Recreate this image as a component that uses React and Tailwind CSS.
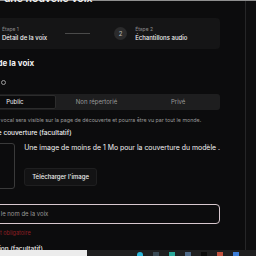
export default function App() {
  return (
    <div className="w-[256px] h-[256px] overflow-hidden bg-[#0c0c0d] flex flex-col font-['Inter',sans-serif] text-[#f1f1f1]">
      <div className="flex flex-1 min-h-0 border-t border-[#8f8f8f]">
        <div className="w-[272px] ml-[-27px] shrink-0 flex flex-col">
          <div className="w-[247px] flex flex-col">
            <h1 className="text-[10.5px] font-semibold leading-[12px] mt-[-8px] whitespace-nowrap">Créer une nouvelle voix</h1>
            <div className="mt-[13px] h-[31px] rounded-[4px] bg-[#151516] flex items-center px-[8px]">
              <div className="w-[13px] h-[13px] rounded-full bg-[#e8e8e8] text-[#111] text-[6px] flex items-center justify-center shrink-0">1</div>
              <div className="ml-[8px] flex flex-col leading-none">
                <span className="text-[5px] text-[#8b8b8b]">Étape 1</span>
                <span className="text-[6px] mt-[3px] font-medium">Détail de la voix</span>
              </div>
              <div className="ml-[18px] w-[25px] h-[1.5px] bg-[#4a4a4a]" />
              <div className="ml-[24px] w-[13px] h-[13px] rounded-full bg-[#2b2b2c] text-[#bdbdbd] text-[6px] flex items-center justify-center shrink-0">2</div>
              <div className="ml-[8px] flex flex-col leading-none">
                <span className="text-[5px] text-[#8b8b8b]">Étape 2</span>
                <span className="text-[6px] mt-[3px] font-medium">Échantillons audio</span>
              </div>
            </div>
            <h2 className="mt-[9px] text-[8px] font-bold leading-[10px]">Détail de la voix</h2>
            <div className="mt-[11px] flex items-center gap-[2px] text-[6.5px] font-medium leading-none">
              <span>Visibilité</span>
              <span className="w-[5px] h-[5px] rounded-full border border-[#9a9a9a]" />
            </div>
            <div className="mt-[8px] h-[16px] rounded-[3px] bg-[#1e1e1f] p-[1px] grid grid-cols-3 text-[6px] leading-none">
              <div className="rounded-[2px] bg-[#0c0c0d] border border-[#2c2c2c] flex items-center justify-center">Public</div>
              <div className="flex items-center justify-center text-[#9a9a9a]">Non répertorié</div>
              <div className="flex items-center justify-center text-[#9a9a9a]">Privé</div>
            </div>
            <p className="mt-[7px] text-[5.3px] text-[#9a9a9a] leading-[6px] whitespace-nowrap">Le modèle vocal sera visible sur la page de découverte et pourra être vu par tout le monde.</p>
            <div className="mt-[6px] text-[6.5px] font-medium leading-[8px]">Image de couverture (facultatif)</div>
            <div className="mt-[6px] flex">
              <div className="w-[43px] h-[46px] rounded-[3px] border border-[#3a3a3a] flex items-center justify-center">
                <svg width="12" height="12" viewBox="0 0 24 24" fill="none" stroke="#cfcfcf" strokeWidth="2">
                  <rect x="3" y="3" width="18" height="18" rx="2" />
                  <circle cx="9" cy="9" r="2" />
                  <path d="M21 15l-5-5L5 21" />
                </svg>
              </div>
              <div className="ml-[9px] flex flex-col items-start">
                <span className="mt-[1px] text-[6.9px] leading-[8px] whitespace-nowrap">Une image de moins de 1 Mo pour la couverture du modèle .</span>
                <button className="mt-[16px] h-[18px] px-[7px] rounded-[3px] bg-[#131314] border border-[#1f1f20] text-[6px] font-medium leading-none">Télécharger l'image</button>
              </div>
            </div>
            <div className="mt-[4px] text-[6.5px] font-medium leading-[8px]">Nom</div>
            <div className="mt-[3px] h-[20px] rounded-[4px] border-[1.5px] border-[#d8c8ce] flex items-center px-[7px]">
              <span className="text-[6px] text-[#9a9a9a] leading-none">Entrez le nom de la voix</span>
            </div>
            <p className="mt-[6px] text-[5.5px] text-[#8e1f24] leading-[6px]">Le nom est obligatoire</p>
            <div className="mt-[9px] text-[6.5px] font-medium leading-[8px]">Description (facultatif)</div>
          </div>
        </div>
        <div className="flex-1 border-l border-[#262627] bg-[#0e0e0f]" />
      </div>
      <div className="h-[6px] flex shrink-0">
        <div className="w-[87px] bg-[#ececec]" />
        <div className="flex-1 bg-[#1f1f20] flex items-start pt-[2px] gap-[10px] pl-[50px]">
          <span className="w-[6px] h-[4px] rounded-t-full bg-[#2bb5d8]" />
          <span className="w-[6px] h-[4px] bg-[#3a4a55]" />
          <span className="w-[6px] h-[4px] bg-[#2aa89a]" />
          <span className="w-[6px] h-[4px] bg-[#4f6a88]" />
          <span className="w-[6px] h-[4px] bg-[#0b0b0b]" />
          <span className="w-[6px] h-[4px] bg-[#c0523f]" />
          <span className="w-[6px] h-[4px] bg-[#3c7dd8]" />
        </div>
      </div>
    </div>
  );
}
